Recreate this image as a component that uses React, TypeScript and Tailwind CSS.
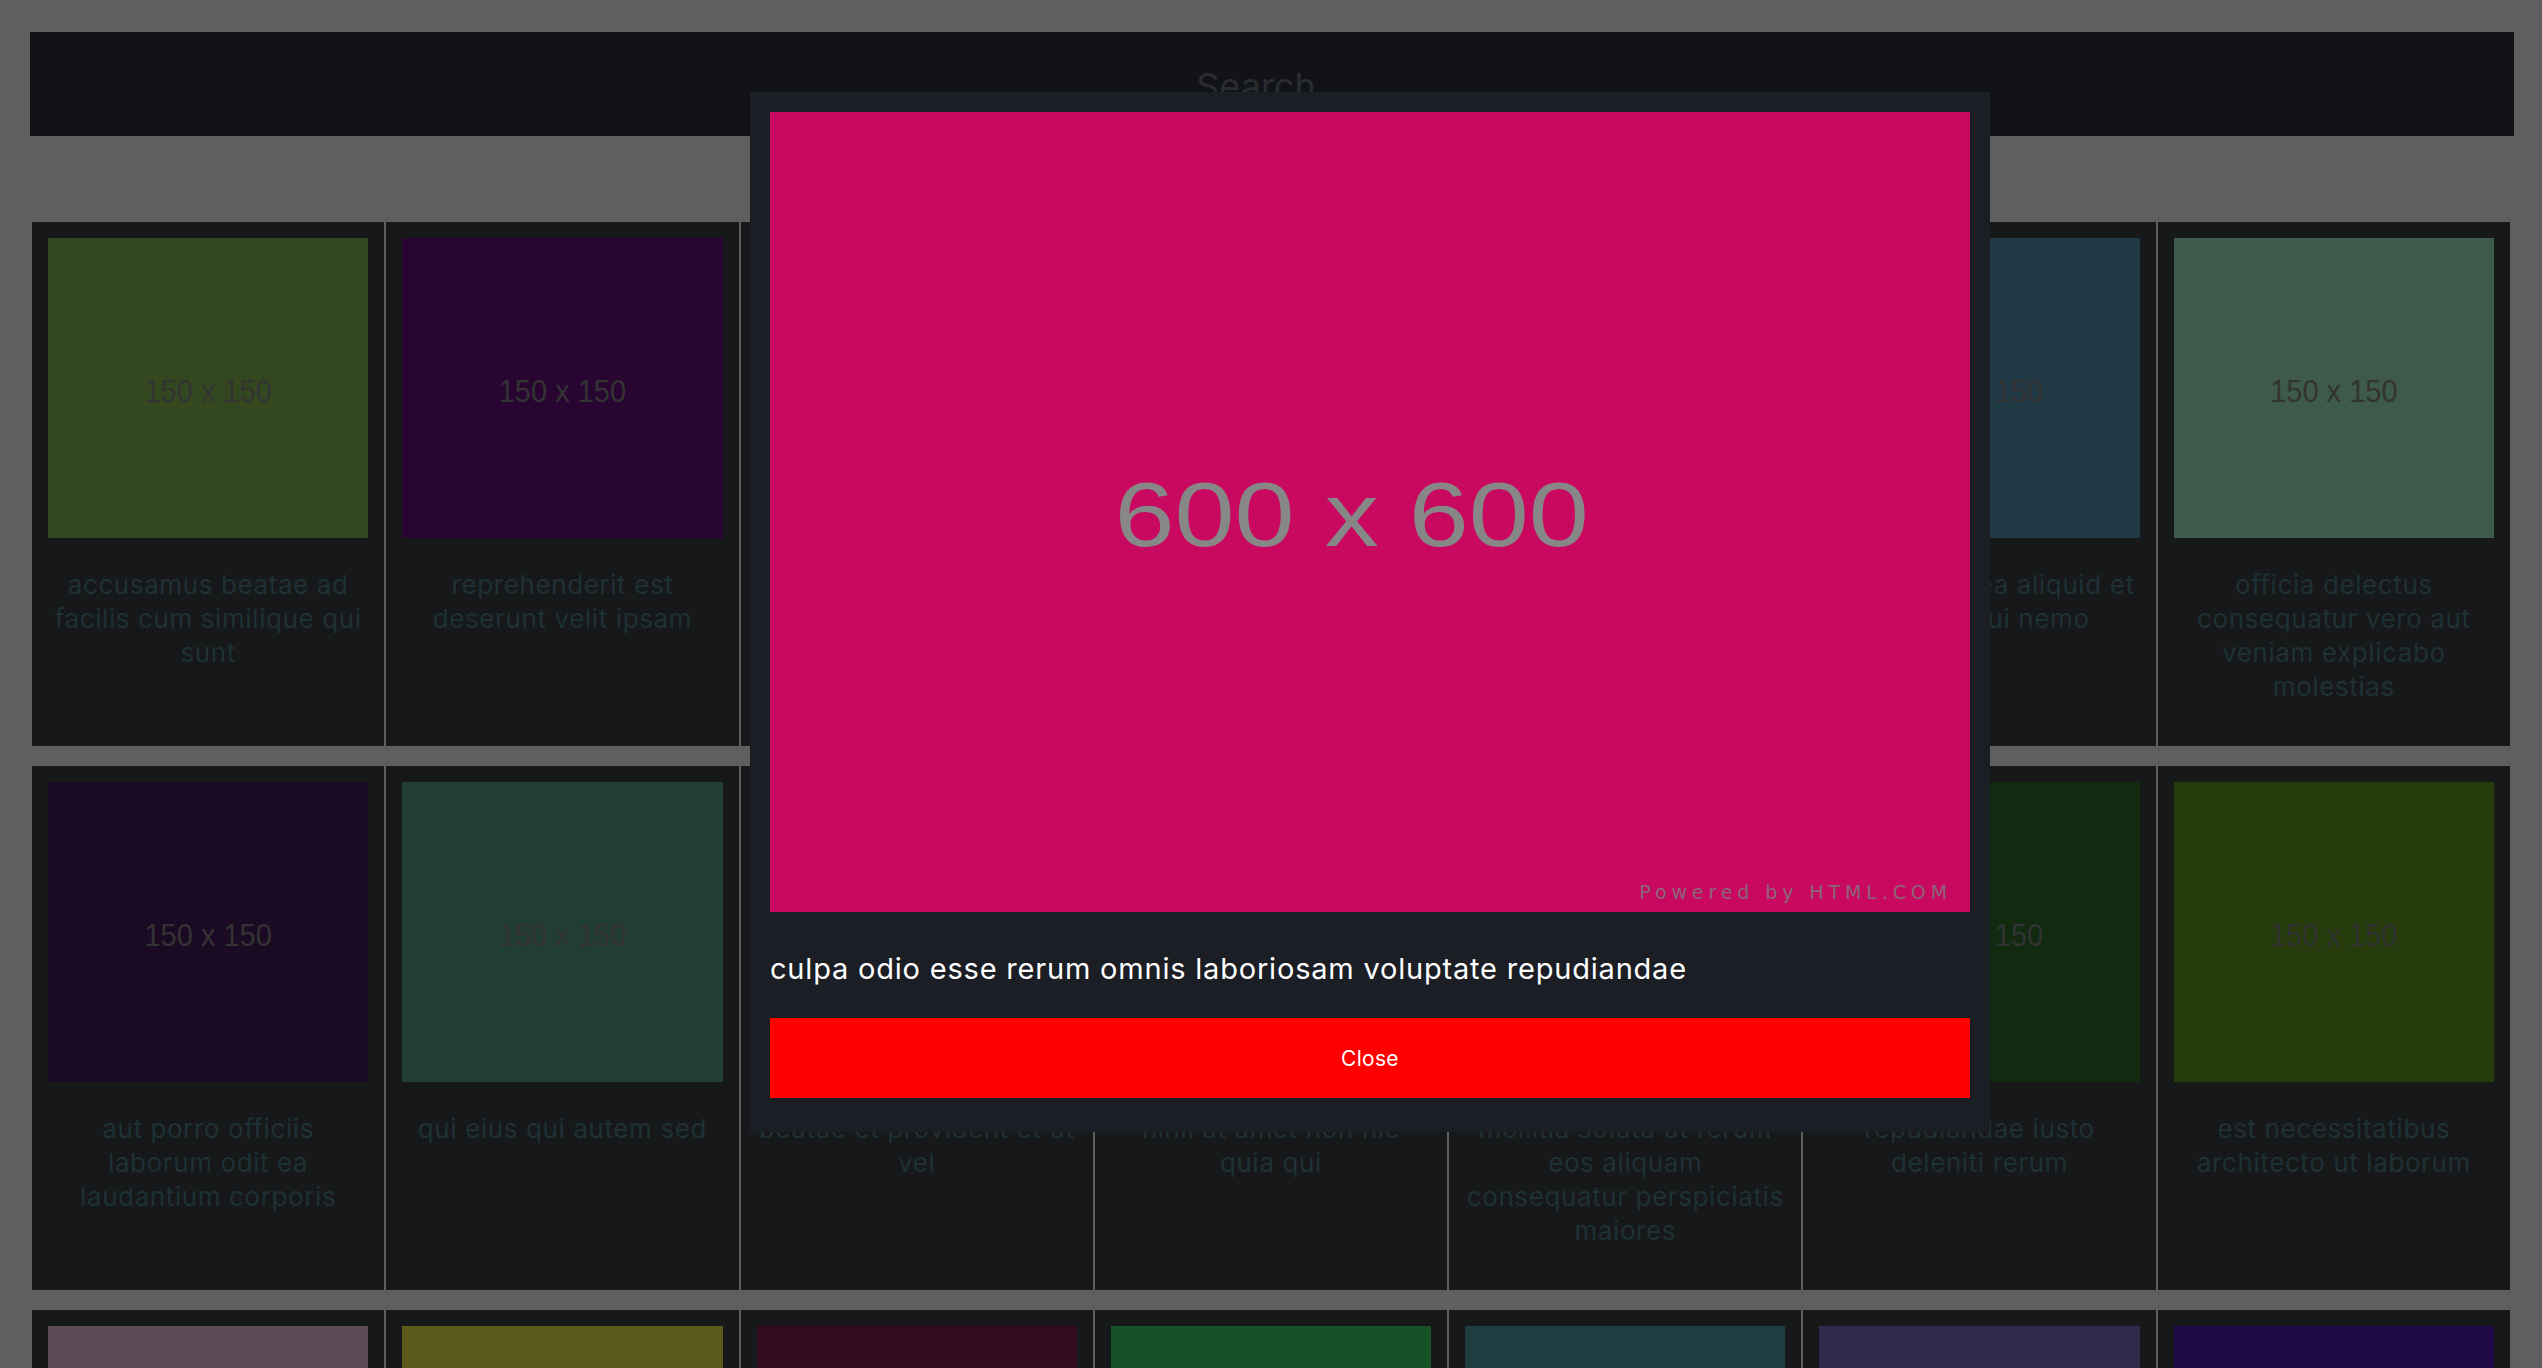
interface Photo {
  title: string;
  bg: string;
}

// album 1 thumbnails, colours already dimmed by the modal backdrop
const PHOTOS: Photo[] = [
  { title: "accusamus beatae ad facilis cum similique qui sunt", bg: "bg-[#33481f]" },
  { title: "reprehenderit est deserunt velit ipsam", bg: "bg-[#290632]" },
  { title: "officia porro iure quia iusto qui ipsa ut modi", bg: "bg-[#0d551e]" },
  { title: "culpa odio esse rerum omnis laboriosam voluptate repudiandae", bg: "bg-[#4a0e29]" },
  { title: "natus nisi omnis corporis facere molestiae rerum in", bg: "bg-[#562535]" },
  { title: "accusamus ea aliquid et amet sequi nemo", bg: "bg-[#213845]" },
  { title: "officia delectus consequatur vero aut veniam explicabo molestias", bg: "bg-[#3e5a4a]" },
  { title: "aut porro officiis laborum odit ea laudantium corporis", bg: "bg-[#1b0a24]" },
  { title: "qui eius qui autem sed", bg: "bg-[#223d36]" },
  { title: "beatae et provident et ut vel", bg: "bg-[#2d0407]" },
  { title: "nihil at amet non hic quia qui", bg: "bg-[#0a5139]" },
  { title: "mollitia soluta ut rerum eos aliquam consequatur perspiciatis maiores", bg: "bg-[#24404a]" },
  { title: "repudiandae iusto deleniti rerum", bg: "bg-[#112a10]" },
  { title: "est necessitatibus architecto ut laborum", bg: "bg-[#263c0d]" },
  { title: "harum dicta similique quis dolore earum ex qui", bg: "bg-[#5b4a53]" },
  { title: "iusto sunt nobis quasi veritatis quas expedita voluptatum deserunt", bg: "bg-[#5b5a1b]" },
  { title: "natus doloribus necessitatibus ipsa", bg: "bg-[#330a1e]" },
  { title: "laboriosam odit nam necessitatibus et illum dolores reiciendis", bg: "bg-[#165127]" },
  { title: "perferendis nesciunt eveniet et optio a", bg: "bg-[#1f3c40]" },
  { title: "assumenda voluptatem laboriosam enim consequatur veniam placeat reiciendis error", bg: "bg-[#2e2b4c]" },
  { title: "ad et natus qui", bg: "bg-[#1e0845]" },
];

function PhotoCard({ photo }: { photo: Photo }): JSX.Element {
  return (
    <div className="h-[524px] bg-[#16181a] px-[16px] pt-[16px]">
      <div className={`flex h-[300px] items-center justify-center ${photo.bg}`}>
        <span className="mt-[7px] scale-y-110 font-['Liberation_Sans',Arial,sans-serif] text-[29px] text-[#333333]">
          150 x 150
        </span>
      </div>
      <p className="mt-[30px] text-center font-['Inter',sans-serif] text-[26px] leading-[34px] tracking-[0.6px] text-[#1e3134]">
        {photo.title}
      </p>
    </div>
  );
}

export default function App(): JSX.Element {
  return (
    <div className="h-[1368px] overflow-hidden bg-[#5f5f5f] pt-[32px]">
      <div className="ml-[30px] mr-[28px]">
        <input
          type="text"
          placeholder="Search"
          className="block h-[104px] w-full bg-[#111318] pr-[32px] pt-[3px] text-center font-['Inter',sans-serif] text-[36px] text-[#2a2c30] outline-none placeholder:text-[#2a2c30]"
        />
      </div>

      <div className="mx-[32px] mt-[86px] grid grid-cols-7 gap-x-[2px] gap-y-[20px]">
        {PHOTOS.map((photo, i) => (
          <PhotoCard key={i} photo={photo} />
        ))}
      </div>

      {/* lightbox */}
      <div className="fixed left-[750px] top-[92px] w-[1240px] bg-[#1b1e25] px-[20px] pb-[34px] pt-[20px]">
        <div className="relative flex h-[800px] w-full items-center justify-center bg-[#c8095f]">
          <span className="mr-[36px] mt-[6px] scale-x-[1.2] font-['Liberation_Sans',Arial,sans-serif] text-[90px] leading-none text-[#878787]">
            600 x 600
          </span>
          <span className="absolute bottom-[6px] right-[18px] font-['DejaVu_Sans',sans-serif] text-[19px] tracking-[4.9px] text-[#8c6579]">
            Powered by HTML.COM
          </span>
        </div>
        <p className="mb-[29px] mt-[37px] font-['Inter',sans-serif] text-[29px] leading-[40px] tracking-[0.8px] text-white">
          culpa odio esse rerum omnis laboriosam voluptate repudiandae
        </p>
        <button
          type="button"
          className="block h-[80px] w-full bg-[#ff0000] pt-[2px] font-['Inter',sans-serif] text-[21px] tracking-[0.3px] text-white"
        >
          Close
        </button>
      </div>
    </div>
  );
}
